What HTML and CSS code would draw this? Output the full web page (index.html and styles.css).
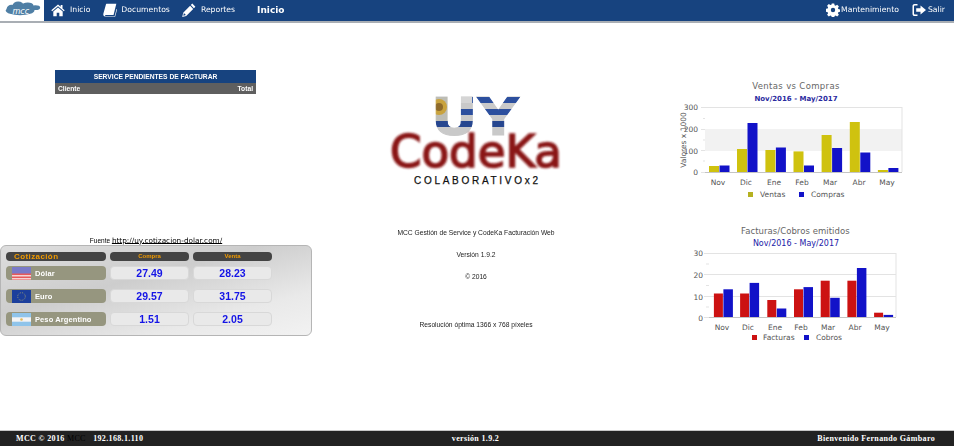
FILE: index.html
```html
<!DOCTYPE html>
<html lang="es">
<head>
<meta charset="utf-8">
<title>MCC</title>
<link rel="stylesheet" href="styles.css">
</head>
<body>
<header class="topbar">
  <div class="brand">
    <svg class="brand-logo" viewBox="0 0 44 22">
      <g class="cloud">
        <ellipse cx="11" cy="9" rx="5" ry="4"/><ellipse cx="18" cy="6" rx="6" ry="4.500"/><ellipse cx="28" cy="6" rx="6" ry="3.500"/><ellipse cx="36" cy="8" rx="5" ry="2.500"/>
        <ellipse cx="20" cy="11" rx="15" ry="5"/>
      </g>
      <text class="brand-text" x="12" y="15">mcc</text>
    </svg>
  </div>
  <nav class="nav">
    <a class="nav-item nav-home">
      <svg class="icon" viewBox="0 0 14 14"><path d="M7 1.500 0.300 7.300l.9 1L7 3.300l5.800 5 .9-1L11.500 5.400V2H9.700v1.800z"/><path d="M7 4.600 2.300 8.600V13.200h3.400V9.800h2.600v3.400h3.400V8.600z"/></svg>
      <span>Inicio</span>
    </a>
    <a class="nav-item nav-docs">
      <svg class="icon" viewBox="0 0 15 15"><path d="M4 .8h10.300l-.3 1.200-2.700 10.800H3.300c-.8 0-1.200.4-1.200.8s.4.7 1.200.7h9.200l2-8 .6.500L13 14.600H3c-1.500 0-2.700-.8-2.700-2.300 0-.5.1-1 .3-1.500L3 2.200C3.200 1.400 3.500.8 4 .8zM5.500 3.400h6.500l-.2.8H5.300zM5 5.400h6.500l-.2.8H4.800z"/></svg>
      <span>Documentos</span>
    </a>
    <a class="nav-item nav-reports">
      <svg class="icon" viewBox="0 0 14 14"><path d="M10.300.6 13.400 3.700l-1.500 1.500-3.100-3.100zM8.100 2.800l3.100 3.100-7 7-4 1 1-4.100zM1.900 10.100l-.6 2.600 2.600-.6z"/></svg>
      <span>Reportes</span>
    </a>
    <span class="page-title">Inicio</span>
  </nav>
  <div class="nav-right">
    <a class="nav-item nav-maint">
      <svg class="icon" viewBox="0 0 14 14"><path fill-rule="evenodd" d="M5.800.5h2.400l.4 1.800 1 .4 1.600-1 1.700 1.700-1 1.600.4 1 1.800.4v2.400l-1.800.4-.4 1 1 1.600-1.700 1.700-1.600-1-1 .4-.4 1.800H5.800l-.4-1.800-1-.4-1.600 1-1.700-1.700 1-1.600-.4-1-1.800-.4V5.800l1.800-.4.4-1-1-1.600 1.700-1.700 1.600 1 1-.4zM7 4.800a2.200 2.200 0 1 0 0 4.400 2.200 2.200 0 0 0 0-4.400z"/></svg>
      <span>Mantenimiento</span>
    </a>
    <a class="nav-item nav-exit">
      <svg class="icon" viewBox="0 0 14 14"><path d="M5.500 1H2.600C1.400 1 .5 1.900.5 3.100v7.800C.5 12.100 1.400 13 2.600 13h2.900v-1.500H2.800c-.5 0-.8-.3-.8-.8V3.300c0-.5.3-.8.8-.8h2.700z"/><path d="M8.500 2.400 14 7l-5.500 4.600V8.800H4.200V5.200h4.300z"/></svg>
      <span>Salir</span>
    </a>
  </div>
</header>

<main class="content">
  <section class="col-left">
    <div class="pending">
      <div class="pending-title">SERVICE PENDIENTES DE FACTURAR</div>
      <div class="pending-head"><span>Cliente</span><span>Total</span></div>
    </div>
    <p class="source">Fuente <a class="source-link">http://uy.cotizacion-dolar.com/</a></p>
    <div class="rates">
      <div class="rate-head rate-head-main">Cotización</div>
      <div class="rate-head">Compra</div>
      <div class="rate-head">Venta</div>

      <div class="rate-name">
        <svg class="flag" viewBox="0 0 19 13"><rect width="19" height="13" fill="#e85a5a"/><rect y="8" width="19" height="1.500" fill="#f4d4d4"/><rect y="11" width="19" height="1.500" fill="#f4d4d4"/><rect width="19" height="6.500" fill="#7a7ac8"/></svg>
        <span>Dólar</span>
      </div>
      <div class="rate-value">27.49</div>
      <div class="rate-value">28.23</div>

      <div class="rate-name">
        <svg class="flag" viewBox="0 0 19 13"><rect width="19" height="13" fill="#1c3f9c"/><circle cx="9.500" cy="6.500" r="3.800" fill="none" stroke="#b9b26a" stroke-width=".7" stroke-dasharray="1 1"/></svg>
        <span>Euro</span>
      </div>
      <div class="rate-value">29.57</div>
      <div class="rate-value">31.75</div>

      <div class="rate-name">
        <svg class="flag" viewBox="0 0 19 13"><rect width="19" height="13" fill="#8fc4ea"/><rect y="4.300" width="19" height="4.400" fill="#f4f4f4"/><circle cx="9.500" cy="6.500" r="1.300" fill="#e2b95a"/></svg>
        <span>Peso Argentino</span>
      </div>
      <div class="rate-value">1.51</div>
      <div class="rate-value">2.05</div>
    </div>
  </section>

  <section class="col-center">
    <svg class="logo" viewBox="380 80 190 110">
      <defs>
        <pattern id="uyflag" patternUnits="userSpaceOnUse" x="425" y="97" width="100" height="42">
          <rect width="100" height="42" fill="#c9c9c9"/>
          <rect y="0" width="100" height="6" fill="#2c4f9e"/>
          <rect y="12" width="100" height="6" fill="#2c4f9e"/>
          <rect y="24" width="100" height="6" fill="#26468f"/>
          <rect x="0" width="26" height="24" fill="#bdbdb5"/>
          <rect x="26" width="20" height="6" fill="#d5d5d5"/>
          <circle cx="13" cy="10" r="8" fill="#c9a33e"/>
          <circle cx="13" cy="10" r="4" fill="#8f6b2a"/>
        </pattern>
        <filter id="soft" x="-5%" y="-5%" width="110%" height="110%"><feGaussianBlur stdDeviation=".8"/></filter>
      </defs>
      <text class="logo-uy" x="430" y="135" textLength="88" lengthAdjust="spacingAndGlyphs" fill="url(#uyflag)" stroke="url(#uyflag)">UY</text>
      <text class="logo-codeka" x="389" y="167" textLength="172" lengthAdjust="spacingAndGlyphs" filter="url(#soft)">CodeKa</text>
      <text class="logo-sub" x="413" y="184" textLength="124">COLABORATIVOx2</text>
    </svg>
    <p class="about about-first">MCC Gestión de Service y CodeKa Facturación Web</p>
    <p class="about">Versión 1.9.2</p>
    <p class="about">© 2016</p>
    <p class="about about-last">Resolución óptima 1366 x 768 píxeles</p>
  </section>

  <section class="col-right">
    <svg class="chart chart-a" viewBox="670 75 240 130">
      <text class="chart-title" x="796" y="89" text-anchor="middle">Ventas vs Compras</text>
      <text class="chart-sub chart-sub-a" x="796" y="101" text-anchor="middle">Nov/2016 - May/2017</text>
      <rect class="plot-bg" x="705" y="107" width="197" height="65"/>
      <rect class="plot-band" x="705" y="129" width="197" height="22"/>
      <path class="grid-line" d="M705 107.500H902M902 107V172M701 107.500H705M701 129.500H705M701 150.500H705M701 172.500H705M703 118.500H705M703 140H705M703 161H705"/>
      <g class="bar-y">
        <rect x="709" y="166" width="10" height="6"/><rect x="737" y="149" width="10" height="23"/><rect x="765.400" y="150" width="10" height="22"/><rect x="793.500" y="151.400" width="10" height="20.600"/><rect x="821.600" y="135" width="10" height="37"/><rect x="849.800" y="122" width="10" height="50"/><rect x="877.900" y="170" width="10" height="2"/>
      </g>
      <g class="bar-b">
        <rect x="719.500" y="165.500" width="10" height="6.500"/><rect x="747.500" y="123" width="10" height="49"/><rect x="775.900" y="147.500" width="10" height="24.500"/><rect x="804" y="165.500" width="10" height="6.500"/><rect x="832.100" y="148" width="10" height="24"/><rect x="860.300" y="152.500" width="10" height="19.500"/><rect x="888.400" y="168" width="10" height="4"/>
      </g>
      <path class="axis" d="M705 172.500H902"/>
      <g class="tick" text-anchor="end">
        <text x="698" y="110">300</text><text x="698" y="132">200</text><text x="698" y="154">100</text><text x="698" y="175">0</text>
      </g>
      <text class="tick" transform="translate(686 140) rotate(-90)" text-anchor="middle">Valores x 1000</text>
      <g class="tick" text-anchor="middle">
        <text x="718" y="185">Nov</text><text x="746" y="185">Dic</text><text x="774" y="185">Ene</text><text x="802" y="185">Feb</text><text x="830" y="185">Mar</text><text x="859" y="185">Abr</text><text x="887" y="185">May</text>
      </g>
      <rect class="legend-y" x="748" y="192" width="5" height="5"/><text class="tick" x="760" y="197">Ventas</text>
      <rect class="legend-b" x="799" y="192" width="5" height="5"/><text class="tick" x="811" y="197">Compras</text>
    </svg>
    <svg class="chart chart-b" viewBox="670 220 240 130">
      <text class="chart-title" x="741" y="234" textLength="109">Facturas/Cobros emitidos</text>
      <text class="chart-sub chart-sub-b" x="796" y="246" text-anchor="middle">Nov/2016 - May/2017</text>
      <path class="grid-line" d="M709 253.500H896M709 274.500H896M709 296.500H896M896 253V317M704 253.500H709M704 274.500H709M704 296.500H709M704 317.500H709M706 264H709M706 285.500H709M706 307H709"/>
      <g class="bar-r">
        <rect x="713.900" y="293.500" width="9" height="23.500"/><rect x="740.100" y="293.500" width="9" height="23.500"/><rect x="767.300" y="300" width="9" height="17"/><rect x="794" y="289.300" width="9" height="27.700"/><rect x="820.700" y="280.700" width="9" height="36.300"/><rect x="847.400" y="280.700" width="9" height="36.300"/><rect x="874.100" y="312.700" width="9" height="4.300"/>
      </g>
      <g class="bar-b">
        <rect x="723.400" y="289.300" width="9.500" height="27.700"/><rect x="749.600" y="282.900" width="9.500" height="34.100"/><rect x="776.800" y="308.500" width="9.500" height="8.500"/><rect x="803.500" y="287.100" width="9.500" height="29.900"/><rect x="830.200" y="297.800" width="9.500" height="19.200"/><rect x="856.900" y="268" width="9.500" height="49"/><rect x="883.600" y="314.900" width="9.500" height="2.100"/>
      </g>
      <path class="axis" d="M709 317.500H896"/>
      <g class="tick" text-anchor="end">
        <text x="703" y="256">30</text><text x="703" y="278">20</text><text x="703" y="300">10</text><text x="703" y="321">0</text>
      </g>
      <g class="tick" text-anchor="middle">
        <text x="722" y="330">Nov</text><text x="748" y="330">Dic</text><text x="775" y="330">Ene</text><text x="801" y="330">Feb</text><text x="828" y="330">Mar</text><text x="855" y="330">Abr</text><text x="882" y="330">May</text>
      </g>
      <rect class="legend-r" x="752" y="335" width="5" height="5"/><text class="tick" x="763" y="340">Facturas</text>
      <rect class="legend-b" x="804" y="335" width="5" height="5"/><text class="tick" x="816" y="340">Cobros</text>
    </svg>
  </section>
</main>

<footer class="footer">
  <div class="foot-left">MCC © 2016 <span class="foot-hidden">MCC</span> <span class="foot-ip">192.168.1.110</span></div>
  <div class="foot-center">versión 1.9.2</div>
  <div class="foot-right">Bienvenido Fernando Gámbaro</div>
</footer>
</body>
</html>
```
FILE: styles.css
```css
* { box-sizing: border-box; }
html, body { margin: 0; height: 100%; }
body {
  display: flex;
  flex-direction: column;
  height: 446px;
  overflow: hidden;
  background: #fff;
  font-family: "Liberation Sans", Arial, sans-serif;
}
p { margin: 0; }

/* top bar */
.topbar {
  display: flex;
  align-items: flex-start;
  height: 23px;
  background: #17437f;
  border-bottom: 2px solid #a9aeb4;
  color: #fff;
  font-family: "DejaVu Sans", Verdana, sans-serif;
  font-size: 7.700px;
}
.brand { width: 44px; height: 21px; background: #fff; flex: none; }
.brand-logo { display: block; width: 44px; height: 21px; }
.cloud { fill: #4f7fa5; }
.brand-text { fill: #fff; font: italic 8.500px "DejaVu Sans", sans-serif; }
.nav { display: flex; align-items: center; height: 19px; flex: 1; }
.nav-right { display: flex; align-items: center; height: 19px; }
.nav-item { display: flex; align-items: center; color: #fff; filter: blur(.25px); }
.icon { display: block; width: 14px; height: 14px; fill: #fff; flex: none; }
.nav-home { margin-left: 7px; gap: 5px; }
.nav-docs { margin-left: 13px; gap: 4px; }
.nav-reports { margin-left: 12px; gap: 5px; }
.page-title { margin-left: 22px; font-size: 9px; font-weight: 700; filter: blur(.25px); }
.nav-maint { gap: 1px; }
.nav-exit { margin-left: 13px; margin-right: 9px; gap: 2px; }

/* columns */
.content { flex: 1; display: flex; min-height: 0; }
.col-left { width: 312px; flex: none; }
.col-center { width: 328px; flex: none; text-align: center; }
.col-right { flex: 1; }

/* pending panel */
.pending { width: 201px; margin: 47px 0 0 55px; filter: blur(.25px); }
.pending-title {
  height: 13px;
  background: #17437f;
  color: #fff;
  font-size: 6.700px;
  font-weight: 700;
  line-height: 13px;
  text-align: center;
}
.pending-head {
  display: flex;
  justify-content: space-between;
  height: 11px;
  padding: 0 3px;
  background: #5f5f5f;
  color: #fff;
  font-size: 6.700px;
  font-weight: 700;
  line-height: 11px;
}

/* rates */
.source {
  margin-top: 143px;
  height: 8px;
  font-size: 6.500px;
  line-height: 8px;
  text-align: center;
  filter: blur(.25px);
}
.source-link {
  color: #000;
  font-family: "DejaVu Sans", sans-serif;
  font-size: 7.300px;
  text-decoration: underline 1px;
  text-underline-offset: 0;
}
.rates {
  display: grid;
  grid-template-columns: 100px 79px 79px;
  grid-template-rows: 14px 23px 23px 14px;
  column-gap: 4px;
  width: 312px;
  height: 91px;
  padding: 6px 0 0 5px;
  background: linear-gradient(165deg, #dedede 0%, #cdcdcd 40%, #e9e9e9 75%, #f2f2f2 100%);
  border: 1px solid #b5b5b5;
  border-radius: 6px;
  filter: blur(.25px);
}
.rate-head {
  height: 9px;
  background: #444;
  border-radius: 4px;
  color: #f09a00;
  font-size: 6px;
  font-weight: 700;
  line-height: 9px;
  text-align: center;
}
.rate-head-main {
  padding-left: 8px;
  font-size: 8px;
  letter-spacing: .4px;
  text-align: left;
}
.rate-name {
  display: flex;
  align-items: center;
  gap: 4px;
  height: 14px;
  padding-left: 6px;
  background: #96967f;
  border-radius: 4px;
  color: #fff;
  font-size: 7.500px;
  font-weight: 700;
  letter-spacing: .1px;
}
.flag { display: block; width: 19px; height: 13px; flex: none; }
.rate-value {
  height: 14px;
  background: #e9e9e9;
  border: 1px solid #d8d8d8;
  border-radius: 4px;
  color: #1414e6;
  font-size: 10.500px;
  font-weight: 700;
  line-height: 12px;
  text-align: center;
}

/* centre */
.logo { display: block; width: 190px; height: 110px; margin: 57px auto 0; }
.logo-uy { font: 700 52px "DejaVu Sans", sans-serif; stroke-width: 1px; }
.logo-codeka { font: 400 45px "DejaVu Sans", sans-serif; fill: #8a1515; stroke: #8a1515; stroke-width: 1.600px; }
.logo-sub { font: 400 10px "Liberation Sans", sans-serif; fill: #111; stroke: #111; stroke-width: .25px; }
.about { height: 9px; font-size: 6.700px; line-height: 9px; color: #222; filter: blur(.25px); }
.about-first { margin-top: 38px; }
.about + .about { margin-top: 13px; }
.about + .about-last { margin-top: 39px; }

/* charts */
.chart { display: block; width: 240px; height: 130px; margin-left: 30px; }
.chart-a { margin-top: 52px; }
.chart-b { margin-top: 15px; }
.chart-title { font: 8.500px "DejaVu Sans", sans-serif; fill: #666; letter-spacing: .35px; }
.chart-sub { font: 8px "DejaVu Sans", sans-serif; }
.chart-sub-a { fill: #2a2aa0; font-weight: 700; font-size: 7px; }
.chart-sub-b { fill: #2222a8; }
.plot-bg { fill: #fff; }
.plot-band { fill: #f2f2f2; }
.grid-line { fill: none; stroke: #e3e3e3; stroke-width: 1; }
.axis { fill: none; stroke: #c4c4c4; stroke-width: 1; }
.tick { font: 7.500px "DejaVu Sans", sans-serif; fill: #555; }
.bar-y { fill: #cfc20f; }
.bar-b { fill: #1212c8; }
.bar-r { fill: #cc1212; }
.legend-y { fill: #b5b120; }
.legend-b { fill: #1212c8; }
.legend-r { fill: #cc1212; }

/* footer */
.footer {
  display: grid;
  grid-template-columns: 1fr auto 1fr;
  align-items: center;
  flex: none;
  height: 16px;
  padding: 0 19px 0 16px;
  background: #222;
  border-top: 1px solid #c5c5c5;
  color: #fff;
  font-family: "Liberation Serif", serif;
  font-size: 8px;
  font-weight: 700;
  letter-spacing: .35px;
}
.foot-hidden { color: #000; font-weight: 400; }
.foot-ip { margin-left: 5px; }
.foot-right { text-align: right; }
```
